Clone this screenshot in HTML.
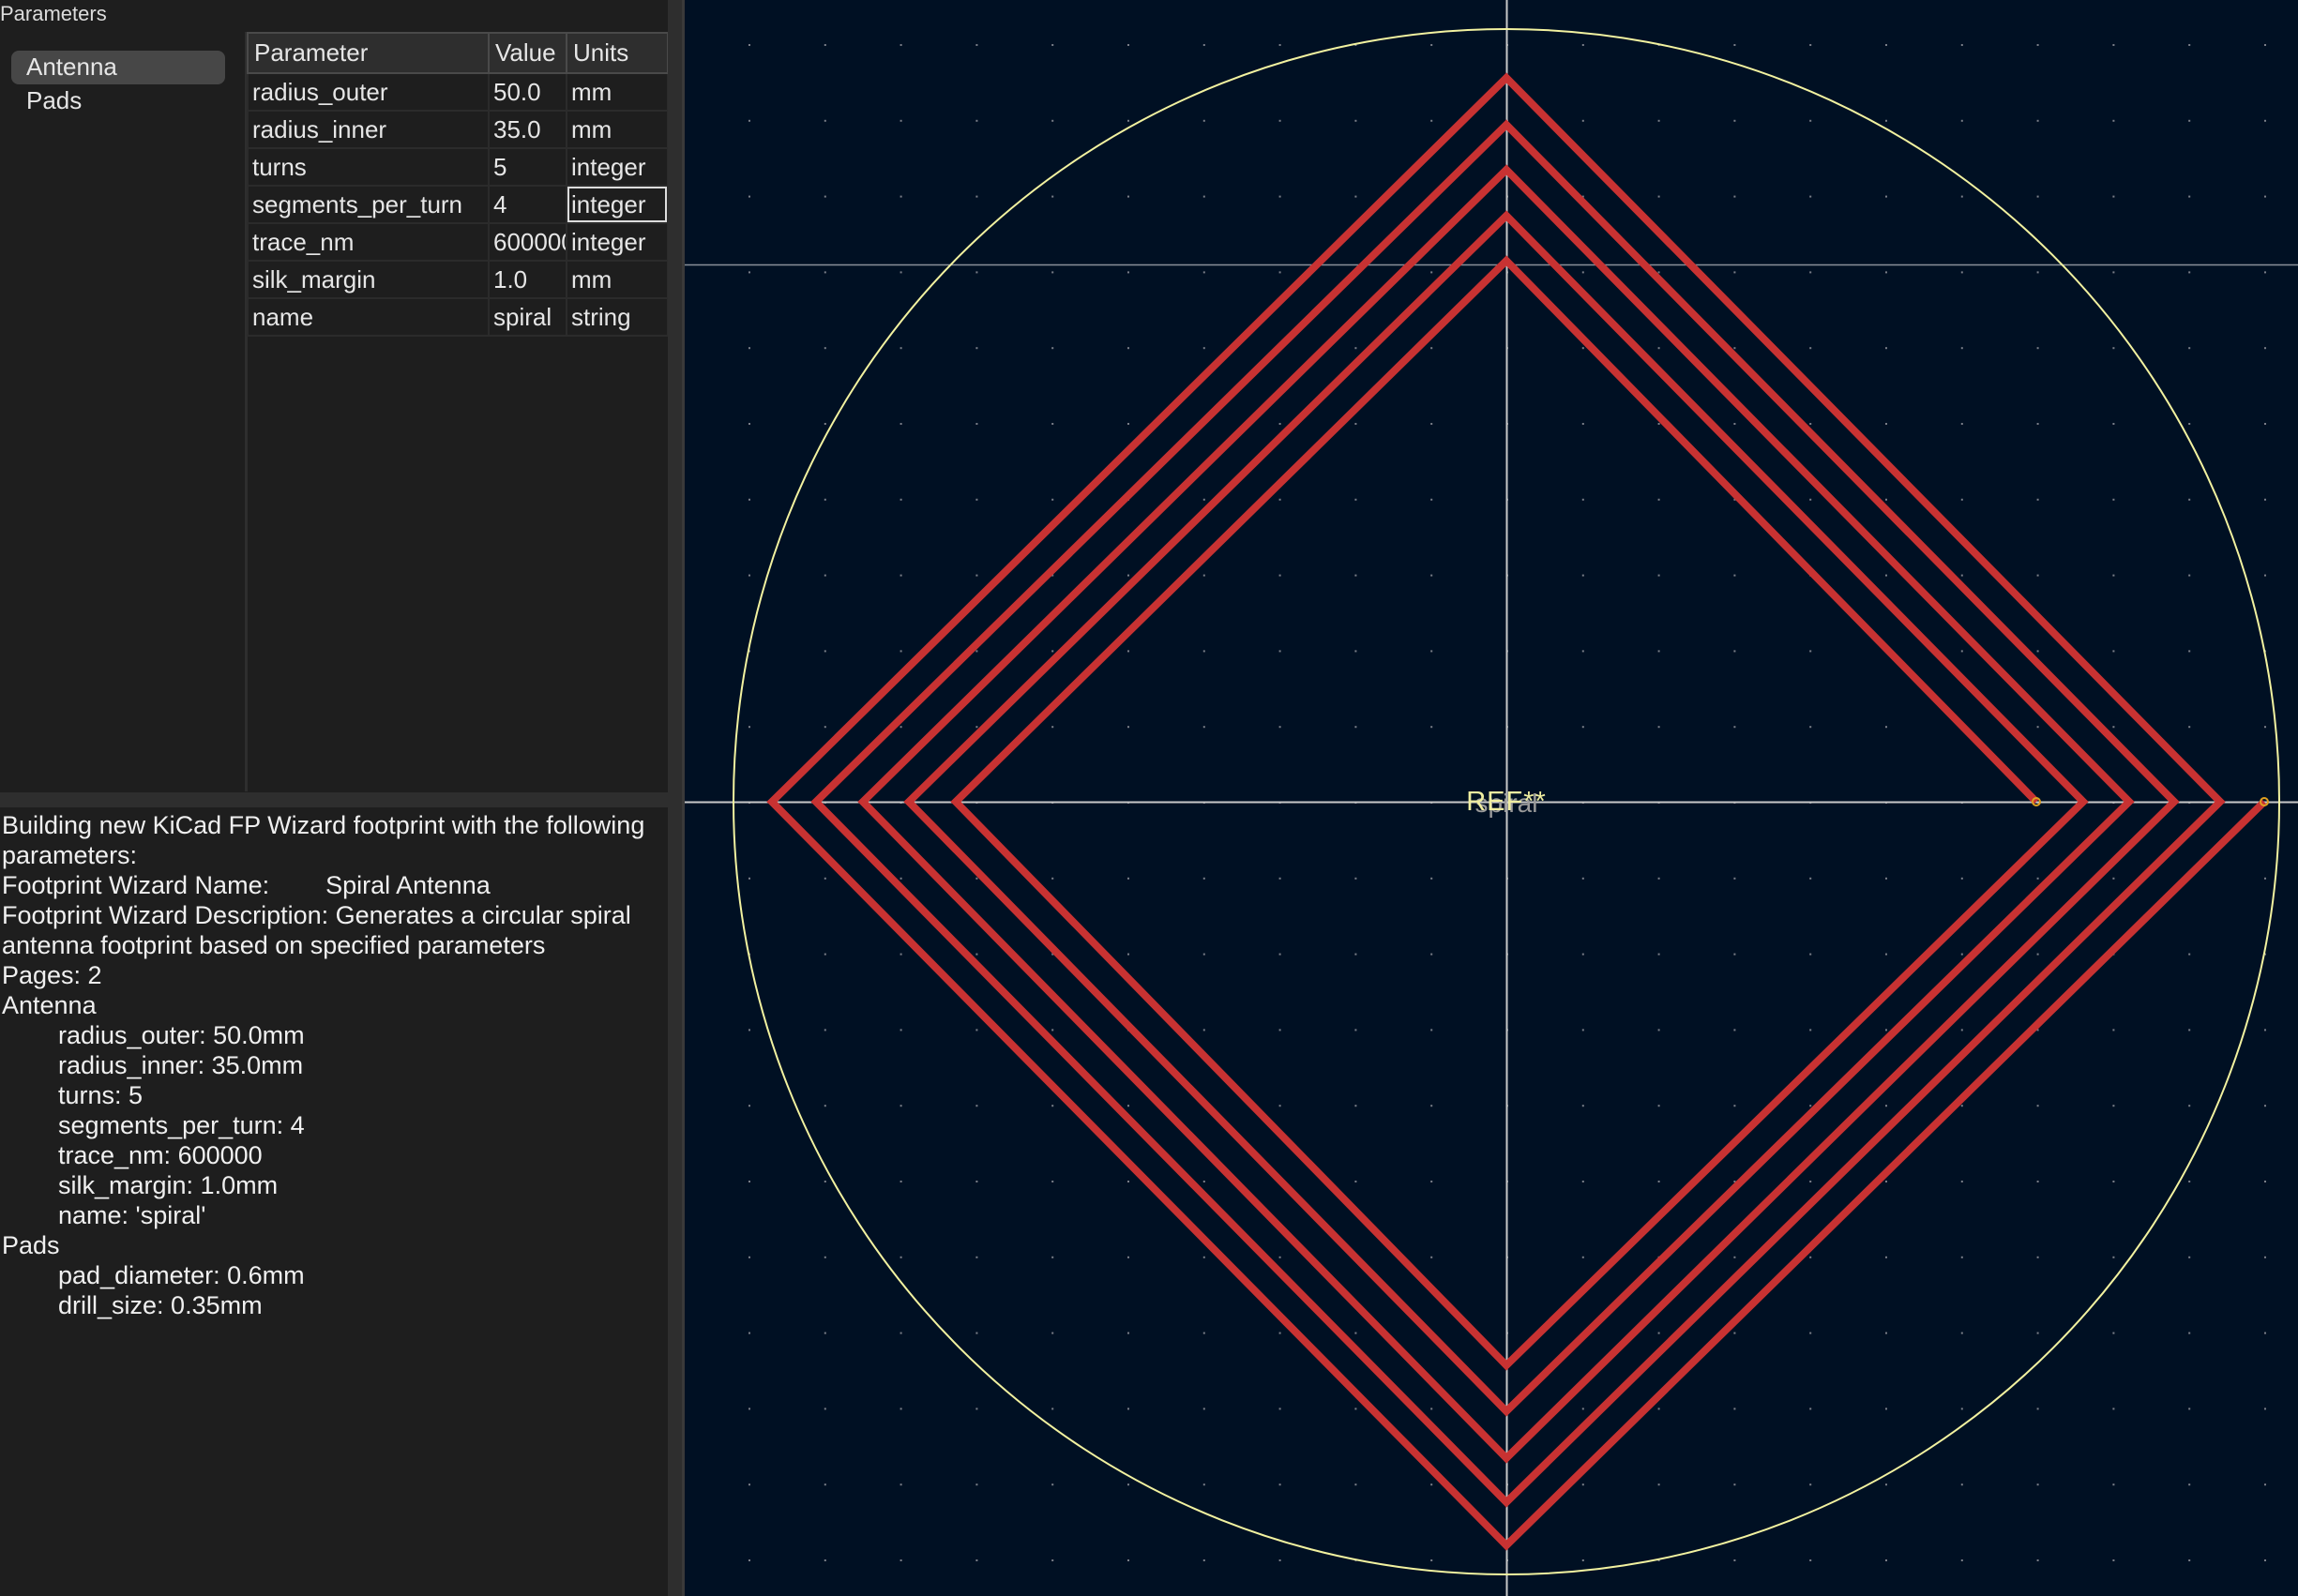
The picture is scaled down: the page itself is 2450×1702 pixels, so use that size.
<!DOCTYPE html>
<html><head><meta charset="utf-8"><style>
*{margin:0;padding:0;box-sizing:border-box}
body{width:2450px;height:1702px;background:#1e1e1e;overflow:hidden;position:relative;font-family:"Liberation Sans",sans-serif;color:#e6e6e6}
.abs{position:absolute}
#title{left:0;top:2px;font-size:22px;color:#dcdcdc}
#pill{left:12px;top:54px;width:228px;height:36px;background:#474747;border-radius:8px}
.li{font-size:26px;left:28px}
table{position:absolute;left:263px;top:34px;border-collapse:collapse;font-size:26px;table-layout:fixed;width:448px}
td{border:2px solid #2b2b2b;height:40px;padding:0 4px;white-space:nowrap;overflow:hidden;text-overflow:clip}
tr.h td{background:#2e2e2e;border-color:#4a4a4a;height:43px;padding-left:6px}
#log{left:2px;top:864px;font-size:27px;line-height:32px;white-space:pre;color:#f0f0f0}
</style></head><body>
<div id="title" class="abs">Parameters</div>
<div id="pill" class="abs"></div>
<div class="abs li" style="top:56px">Antenna</div>
<div class="abs li" style="top:92px">Pads</div>
<div class="abs" style="left:261px;top:34px;width:3px;height:810px;background:#2e2e2e"></div>
<table>
<colgroup><col style="width:257px"><col style="width:83px"><col style="width:108px"></colgroup>
<tr class="h"><td>Parameter</td><td>Value</td><td>Units</td></tr>
<tr><td>radius_outer</td><td>50.0</td><td>mm</td></tr>
<tr><td>radius_inner</td><td>35.0</td><td>mm</td></tr>
<tr><td>turns</td><td>5</td><td>integer</td></tr>
<tr><td>segments_per_turn</td><td>4</td><td style="outline:2px solid #ddd;outline-offset:-3px">integer</td></tr>
<tr><td>trace_nm</td><td>600000</td><td>integer</td></tr>
<tr><td>silk_margin</td><td>1.0</td><td>mm</td></tr>
<tr><td>name</td><td>spiral</td><td>string</td></tr>
</table>
<div class="abs" style="left:0;top:845px;width:712px;height:16px;background:#2e2e2e"></div>
<div id="log" class="abs">Building new KiCad FP Wizard footprint with the following
parameters:
Footprint Wizard Name:        Spiral Antenna
Footprint Wizard Description: Generates a circular spiral
antenna footprint based on specified parameters
Pages: 2
Antenna
        radius_outer: 50.0mm
        radius_inner: 35.0mm
        turns: 5
        segments_per_turn: 4
        trace_nm: 600000
        silk_margin: 1.0mm
        name: 'spiral'
Pads
        pad_diameter: 0.6mm
        drill_size: 0.35mm</div>
<div class="abs" style="left:712px;top:0;width:15px;height:1702px;background:#2e2e2e"></div>
<div class="abs" style="left:727px;top:0;width:3px;height:1702px;background:#3a3a3a"></div>
<svg class="abs" style="left:730px;top:0" width="1720" height="1702" viewBox="730 0 1720 1702">
<defs><pattern id="g" x="1606" y="855" width="80.8" height="80.8" patternUnits="userSpaceOnUse"><rect x="0" y="0" width="2" height="2" fill="#7a7f88"/></pattern></defs>
<rect x="730" y="0" width="1720" height="1702" fill="#001023"/>
<rect x="730" y="0" width="1720" height="1702" fill="url(#g)"/>
<line x1="730" y1="282.5" x2="2450" y2="282.5" stroke="#8a8f98" stroke-width="1.5"/>
<line x1="730" y1="855.5" x2="2450" y2="855.5" stroke="#c8c8c8" stroke-width="2"/>
<line x1="1606.5" y1="0" x2="1606.5" y2="1702" stroke="#c8c8c8" stroke-width="2"/>
<circle cx="1606" cy="855" r="824" fill="none" stroke="#f2f2a0" stroke-width="2"/>
<polyline fill="none" stroke="#c83232" stroke-width="8" stroke-linejoin="miter"
points="2414,855 1606,1648 823,855 1606,83 2367,855 1606,1602 870,855 1606,133 2318,855 1606,1555 920,855 1606,181 2270,855 1606,1505 969,855 1606,230 2221,855 1606,1456 1019,855 1606,278 2171,855"/>
<circle cx="2171" cy="855" r="4" fill="none" stroke="#e0a020" stroke-width="2"/>
<circle cx="2414" cy="855" r="4" fill="none" stroke="#e0a020" stroke-width="2"/>
<text x="1606" y="866" text-anchor="middle" font-family="Liberation Sans Narrow, Liberation Sans, sans-serif" font-size="28" fill="#9a9a9a" font-weight="300">spiral</text>
<text x="1606" y="864" text-anchor="middle" font-family="Liberation Sans Narrow, Liberation Sans, sans-serif" font-size="29" fill="#f0eea0" letter-spacing="1">REF**</text>
</svg>
</body></html>
